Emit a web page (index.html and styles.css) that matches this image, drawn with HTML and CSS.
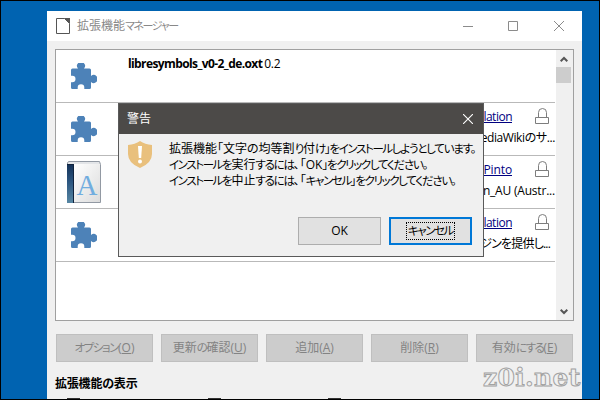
FILE: index.html
```html
<!DOCTYPE html>
<html lang="ja">
<head>
  <meta charset="UTF-8">
  <title>拡張機能マネージャー</title>
  <link rel="stylesheet" href="styles.css">
</head>
<body>
  <svg width="0" height="0" class="defs">
    <symbol id="puzzle" viewBox="0 0 26 26">
      <path fill="#4d82b8" d="M1.500 5.500H7A4 4 0 1 1 13 5.500H18.500Q20 5.500 20 7V13A4 4 0 1 1 20 19V24.500Q20 26 18.500 26H13.300V24.500A3.300 3.300 0 0 0 6.700 24.500V26H1.500Q0 26 0 24.500V19.300H1.200A3.300 3.300 0 0 0 1.200 12.700H0V7Q0 5.500 1.500 5.500Z"/>
    </symbol>
    <symbol id="lock" viewBox="0 0 15 17">
      <path fill="none" stroke="#7d7d7d" d="M3.500 9V4.500a4 4 0 0 1 8 0V9M.500 9.500h13v6h-13z"/>
    </symbol>
  </svg>

  <div class="window">
    <div class="titlebar">
      <svg class="doc-icon" width="14" height="16" viewBox="0 0 14 16"><path fill="#fff" stroke="#555" d="M8.500 .500H.500V15.500H13.500V5.500z"/><path fill="#555" d="M8 0h6v6z"/></svg>
      <span class="title">拡張機能<span class="kana">マネージャー</span></span>
      <svg class="controls" width="102" height="12" viewBox="0 0 102 12"><path fill="none" stroke="#8b8b8b" d="M0 6.500h10M45.500 1.500h9v9h-9zM91 1l10 10M101 1L91 11"/></svg>
    </div>

    <div class="list">
      <div class="rows">
        <div class="row">
          <svg class="ext-icon" width="26" height="26"><use href="#puzzle"/></svg>
          <div class="name"><b>libresymbols_v0-2_de.oxt</b><span>0.2</span></div>
        </div>
        <div class="row">
          <svg class="ext-icon" width="26" height="26"><use href="#puzzle"/></svg>
          <div class="info">
            <div class="publisher"><a>lation</a><svg width="15" height="17"><use href="#lock"/></svg></div>
            <p>ediaWikiのサ...</p>
          </div>
        </div>
        <div class="row">
          <svg class="dict-icon" width="35" height="43" viewBox="0 0 35 43">
            <defs>
              <linearGradient id="spine" x2="0" y2="1"><stop stop-color="#143157"/><stop offset=".45" stop-color="#2c5680"/><stop offset="1" stop-color="#5887a4"/></linearGradient>
              <linearGradient id="cover" x2="1" y2="1"><stop stop-color="#fff"/><stop offset="1" stop-color="#dcdcdc"/></linearGradient>
            </defs>
            <path fill="#e3e5e8" stroke="#9299a3" d="M2.500 .500h31l1 3v38H1.500V2z"/>
            <path fill="url(#cover)" d="M8 3h26v38H8z"/>
            <path fill="url(#spine)" d="M1 3h7v39H1z"/>
            <path stroke="#10233e" d="M7.500 3v39M1 3.500h7"/>
            <text x="21" y="33.500" text-anchor="middle" class="dict-letter">A</text>
          </svg>
          <div class="info">
            <div class="publisher"><a class="loose">Pinto</a><svg width="15" height="17"><use href="#lock"/></svg></div>
            <p class="latin">n_AU (Austr...</p>
          </div>
        </div>
        <div class="row">
          <svg class="ext-icon" width="26" height="26"><use href="#puzzle"/></svg>
          <div class="info">
            <div class="publisher"><a>lation</a><svg width="15" height="17"><use href="#lock"/></svg></div>
            <p class="ja">ジンを提供し...</p>
          </div>
        </div>
      </div>
      <div class="scrollbar">
        <svg width="8" height="7" viewBox="0 0 8 7"><path fill="none" stroke="#555" stroke-width="2" d="M.700 5.300L4 2l3.300 3.300"/></svg>
        <div class="thumb"></div>
        <svg width="8" height="7" viewBox="0 0 8 7"><path fill="none" stroke="#555" stroke-width="2" d="M.700 1.700L4 5l3.300-3.300"/></svg>
      </div>
    </div>

    <div class="actions">
      <button disabled><span class="kana">オプション</span>(<u>O</u>)</button>
      <button disabled>更新<span class="kana">の</span>確認(<u>U</u>)</button>
      <button disabled>追加(<u>A</u>)</button>
      <button disabled>削除(<u>R</u>)</button>
      <button disabled>有効<span class="kana">にする</span>(<u>E</u>)</button>
    </div>

    <h2>拡張機能の表示</h2>
    <div class="checks"><i></i><i></i><i></i></div>
  </div>

  <div class="dialog">
    <div class="dialog-title">
      <span>警告</span>
      <svg width="10" height="10" viewBox="0 0 10 10"><path stroke="#fff" stroke-width="1.100" d="M0 0l10 10M10 0L0 10"/></svg>
    </div>
    <div class="message">
      <svg width="24" height="27" viewBox="0 0 24 27"><path fill="#e9c07d" d="M0 4Q7 3.500 12 0Q17 3.500 24 4V13Q24 22 12 27Q0 22 0 13Z"/><path fill="#fff" d="M10 5h4l-.800 12h-2.400z"/><circle cx="12" cy="20.500" r="2" fill="#fff"/></svg>
      <div class="lines">
        <p>拡張機能「文字の均等割<span class="hira">り</span>付<span class="hira">け」を</span><span class="kana">インストール</span><span class="hira">しようとしています。</span></p>
        <p><span class="kana">インストール</span><span class="hira">を</span>実行<span class="hira">するには</span>、「OK<span class="hira">」を</span><span class="kana">クリック</span><span class="hira">してください。</span></p>
        <p><span class="kana">インストール</span><span class="hira">を</span>中止<span class="hira">するには</span>、「<span class="kana">キャンセル</span><span class="hira">」を</span><span class="kana">クリック</span><span class="hira">してください。</span></p>
      </div>
    </div>
    <div class="dialog-buttons">
      <button>OK</button>
      <button class="focused"><span class="kana">キャンセル</span></button>
    </div>
  </div>

  <div class="watermark">z0i.net</div>
</body>
</html>
```
FILE: styles.css
```css
* {
  box-sizing: border-box;
}

body {
  margin: 0;
  width: 600px;
  height: 400px;
  overflow: hidden;
  position: relative;
  padding: 10px 0 0 46px;
  border: 1px solid #000;
  background: #0063b1;
  font-family: "Open Sans", "Noto Sans CJK JP", sans-serif;
  font-size: 12px;
  line-height: 16px;
  font-feature-settings: "palt";
  color: #000;
}

p, h2 {
  margin: 0;
}

.defs {
  position: absolute;
}

/* kana are set tighter than kanji */
.kana {
  font-size: 11.5px;
  letter-spacing: -1.4px;
}

.hira {
  font-size: 11.5px;
  letter-spacing: -1.25px;
}

.window {
  width: 535px;
  height: 388px;
  background: #f0f0f0;
}

.titlebar {
  display: flex;
  align-items: center;
  height: 30px;
  padding: 0 17px 0 9px;
  background: #fff;
  color: #888;
}

.title {
  margin-left: 7px;
}

.title .kana {
  font-size: 11px;
  letter-spacing: -1.4px;
}

.controls {
  margin-left: auto;
}

.list {
  display: flex;
  width: 519px;
  height: 272px;
  margin: 8px 0 0 8px;
  border: 1px solid #a0a0a0;
  background: #fff;
}

.rows {
  width: 499px;
}

.row {
  display: flex;
  height: 53px;
  border-bottom: 1px solid #b9b9b9;
}

.ext-icon {
  margin: 13px 0 0 15px;
}

.dict-icon {
  margin: 5px 0 0 10px;
}

.dict-letter {
  font: 29px "Liberation Serif", serif;
  fill: #71addf;
}

.name {
  display: flex;
  gap: 2px;
  margin: 6px 0 0 31px;
}

.name b {
  letter-spacing: -0.6px;
}

.name span {
  letter-spacing: -0.3px;
}

.info {
  margin-left: auto;
  text-align: right;
}

.publisher {
  display: flex;
  justify-content: flex-end;
  gap: 23px;
  height: 25px;
  padding: 5px 5px 0 0;
}

.publisher a {
  margin-top: 1px;
  color: #00007f;
  letter-spacing: -0.5px;
  text-decoration: underline;
}

.publisher .loose {
  letter-spacing: -0.1px;
}

.info p {
  margin-top: 2px;
  letter-spacing: -0.4px;
}

.info .latin {
  letter-spacing: -0.2px;
}

.info .ja {
  padding-right: 5px;
  letter-spacing: -0.8px;
}

.scrollbar {
  display: flex;
  flex-direction: column;
  align-items: center;
  width: 17px;
  margin-left: auto;
  padding: 6px 2px 5px 0;
  background: #f0f0f0;
}

.thumb {
  width: 15px;
  height: 16px;
  margin: 4px 0 auto;
  background: #cdcdcd;
}

button {
  padding: 0;
  border: 1px solid #adadad;
  background: #e1e1e1;
  font: inherit;
  font-feature-settings: inherit;
  color: #000;
}

.actions {
  display: grid;
  grid-template-columns: repeat(5, 97px);
  gap: 8px;
  margin: 13px 0 0 9px;
}

.actions button {
  height: 28px;
  border-color: #bfbfbf;
  background: #ccc;
  color: #838383;
}

h2 {
  margin: 14px 0 0 8px;
  font-size: 12px;
  line-height: 16px;
  letter-spacing: -0.2px;
}

.checks {
  display: flex;
  gap: 128px;
  margin: 6px 0 0 20px;
}

.checks i {
  width: 13px;
  height: 2px;
  background: #333;
}

.checks i:last-child {
  margin-left: -21px;
}

.dialog {
  position: absolute;
  left: 117px;
  top: 102px;
  width: 366px;
  height: 154px;
  border: 1px solid #5a5a5a;
  background: #f0f0f0;
}

.dialog-title {
  display: flex;
  align-items: center;
  justify-content: space-between;
  height: 30px;
  padding: 0 10px 0 8px;
  background: #4c4a48;
  color: #fff;
}

.message {
  display: flex;
  gap: 17px;
  height: 83px;
  padding: 7px 0 0 9px;
}

.lines {
  white-space: nowrap;
}

.lines p {
  height: 16px;
}

.dialog-buttons {
  display: flex;
  justify-content: flex-end;
  gap: 8px;
  padding-right: 11px;
}

.dialog-buttons button {
  width: 83px;
  height: 28px;
}

.dialog-buttons .focused {
  border: 2px solid #0078d7;
}

.focused span {
  display: inline-block;
  width: 49px;
  height: 18px;
  line-height: 16px;
  border: 1px dotted #000;
  white-space: nowrap;
}

.watermark {
  position: absolute;
  left: 482px;
  top: 362px;
  font: bold 25px/30px "DejaVu Serif", serif;
  letter-spacing: 0.3px;
  color: #f0f0f0;
  -webkit-text-stroke: 1px #a2a2a2;
}
```
